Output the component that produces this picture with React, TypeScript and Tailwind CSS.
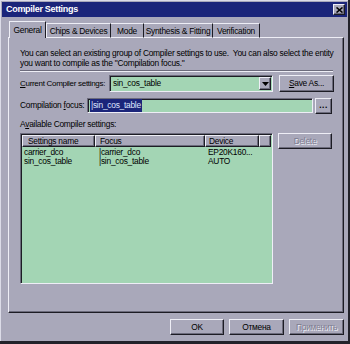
import React from "react";

const raised =
  "border-t border-l border-t-[#eeeef6] border-l-[#eeeef6] border-r border-b border-r-[#1c1c24] border-b-[#1c1c24] shadow-[inset_-1px_-1px_0_#6c6b7c]";
const sunken =
  "border-t border-l border-t-[#6c6b7c] border-l-[#6c6b7c] border-r border-b border-r-[#eeeef6] border-b-[#eeeef6] shadow-[inset_1px_1px_0_#1c1c24]";

function Btn({
  children,
  w,
  disabled,
  extra = "",
}: {
  children: React.ReactNode;
  w: string;
  disabled?: boolean;
  extra?: string;
}) {
  return (
    <div
      className={`${w} ${raised} ${extra} h-[16px] shrink-0 bg-[#a9a8ba] flex items-center justify-center leading-none ${
        disabled ? "text-[#7e7d90] [text-shadow:1px_1px_0_#eeeef6]" : "text-black"
      }`}
    >
      {children}
    </div>
  );
}

export default function App() {
  return (
    <div className="w-[350px] h-[344px] bg-[#22222a] font-['Liberation_Sans',Arial,sans-serif] text-[8.4px] tracking-[-0.25px] text-black whitespace-nowrap">
      <div className="w-[348px] h-[341px] bg-[#a9a8ba] border-l border-t border-[#dcdce8] flex flex-col">
        {/* title bar */}
        <div className="mx-[1px] mt-[1px] h-[15px] bg-[#1b257a] flex items-center justify-between pl-[4px] pr-[2px]">
          <span className="text-white font-bold text-[9px] tracking-[-0.3px] leading-none">Compiler Settings</span>
          <div className={`w-[12px] h-[11px] ${raised} bg-[#a9a8ba] flex items-center justify-center`}>
            <svg width="7" height="6" viewBox="0 0 7 6">
              <path d="M0.5 0.5 L6.5 5.5 M6.5 0.5 L0.5 5.5" stroke="#000" strokeWidth="1.6" />
            </svg>
          </div>
        </div>

        {/* tabs */}
        <div className="mt-[4px] ml-[8px] h-[17px] flex items-end relative z-10">
          <div className="w-[37px] h-[17px] bg-[#a9a8ba] border-t border-l border-[#eeeef6] border-r border-r-[#1c1c24] flex items-start justify-center pt-[4px] leading-none">
            General
          </div>
          <div className="w-[65px] h-[15px] border-t border-l border-[#eeeef6] border-r border-r-[#1c1c24] flex items-start justify-center pt-[3px] leading-none border-b border-b-[#eeeef6]">
            Chips &amp; Devices
          </div>
          <div className="w-[33px] h-[15px] border-t border-[#eeeef6] border-r border-r-[#1c1c24] flex items-start justify-center pt-[3px] leading-none border-b border-b-[#eeeef6]">
            Mode
          </div>
          <div className="w-[69px] h-[15px] border-t border-[#eeeef6] border-r border-r-[#1c1c24] flex items-start justify-center pt-[3px] leading-none border-b border-b-[#eeeef6]">
            Synthesis &amp; Fitting
          </div>
          <div className="w-[47px] h-[15px] border-t border-[#eeeef6] border-r border-r-[#1c1c24] flex items-start justify-center pt-[3px] leading-none border-b border-b-[#eeeef6]">
            Verification
          </div>
        </div>

        {/* panel */}
        <div className="ml-[7px] w-[336px] h-[276px] -mt-[1px] border-t border-l border-[#eeeef6] border-r border-b border-r-[#1c1c24] border-b-[#1c1c24] shadow-[inset_-1px_-1px_0_#6c6b7c] pl-[11px] flex flex-col">
          <div className="pt-[10px] leading-[10px]">
            <div>You can select an existing group of Compiler settings to use.&nbsp; You can also select the entity</div>
            <div>you want to compile as the "Compilation focus."</div>
          </div>
          <div className="mt-[2px] w-[313px] h-[2px] border-t border-[#6c6b7c] border-b border-b-[#eeeef6]" />

          {/* current settings row */}
          <div className="mt-[3px] h-[17px] flex items-center">
            <div className="w-[89px] shrink-0 leading-none text-[8px] tracking-[-0.3px]">
              <span className="underline">C</span>urrent Compiler settings:
            </div>
            <div className={`w-[164px] h-[17px] shrink-0 ${sunken} bg-[#a3d5b4] flex items-center`}>
              <span className="pl-[3px] flex-1 leading-none">sin_cos_table</span>
              <div className={`w-[12px] h-[13px] mr-[1px] ${raised} bg-[#a9a8ba] flex items-center justify-center`}>
                <svg width="7" height="4" viewBox="0 0 7 4">
                  <path d="M0 0 H7 L3.5 4 Z" fill="#000" />
                </svg>
              </div>
            </div>
            <Btn w="w-[55px]" extra="ml-[6px] h-[17px]">
              <span>
                <span className="underline">S</span>ave As...
              </span>
            </Btn>
          </div>

          {/* compilation focus row */}
          <div className="mt-[6px] h-[15px] flex items-center">
            <div className="w-[67px] shrink-0 leading-none">
              Compilation <span className="underline">f</span>ocus:
            </div>
            <div className={`w-[226px] h-[15px] shrink-0 ${sunken} bg-[#a3d5b4] flex items-center pl-[2px]`}>
              <span className="bg-[#1b257a] text-[#dfe6ff] leading-none px-[1px] py-[2px]">|sin_cos_table</span>
            </div>
            <Btn w="w-[17px]" extra="ml-[2px] h-[15px]">
              <span className="font-bold tracking-[0.5px]">...</span>
            </Btn>
          </div>

          <div className="mt-[6px] h-[10px] leading-[10px]">
            A<span className="underline">v</span>ailable Compiler settings:
          </div>

          {/* list row */}
          <div className="mt-[4px] flex items-start">
            <div className={`w-[253px] h-[151px] shrink-0 ${sunken} bg-[#a3d5b4] flex flex-col`}>
              <div className="flex h-[12px] ml-[1px] mt-[1px]">
                <div className={`w-[73px] ${raised} bg-[#a9a8ba] pl-[5px] leading-[10px]`}>Settings name</div>
                <div className={`w-[110px] ${raised} bg-[#a9a8ba] pl-[4px] leading-[10px]`}>Focus</div>
                <div className={`w-[54px] ${raised} bg-[#a9a8ba] pl-[3px] leading-[10px]`}>Device</div>
                <div className={`w-[12px] ${raised} bg-[#a9a8ba]`} />
              </div>
              <div className="flex leading-[9px] mt-[1px]">
                <div className="w-[74px] pl-[3px]">carrier_dco</div>
                <div className="w-[110px] pl-[4px]">|carrier_dco</div>
                <div className="pl-[3px]">EP20K160...</div>
              </div>
              <div className="flex leading-[9px]">
                <div className="w-[74px] pl-[3px]">sin_cos_table</div>
                <div className="w-[110px] pl-[4px]">|sin_cos_table</div>
                <div className="pl-[3px]">AUTO</div>
              </div>
            </div>
            <Btn w="w-[54px]" disabled extra="ml-[5px] h-[16px]">
              Delete
            </Btn>
          </div>
        </div>

        {/* bottom buttons */}
        <div className="mt-[6px] flex justify-end gap-[5px] pr-[4px]">
          <Btn w="w-[54px]">OK</Btn>
          <Btn w="w-[55px]">Отмена</Btn>
          <Btn w="w-[55px]" disabled>
            Применить
          </Btn>
        </div>
      </div>
    </div>
  );
}
